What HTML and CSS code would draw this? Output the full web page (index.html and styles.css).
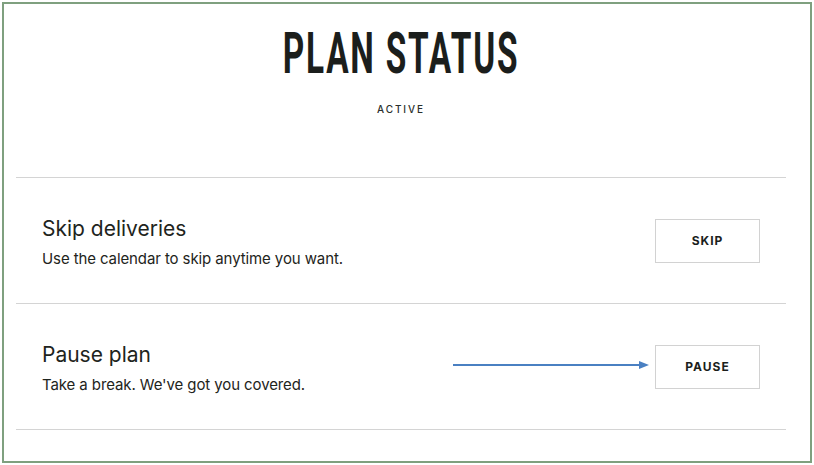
FILE: index.html
```html
<!DOCTYPE html>
<html>
<head>
<meta charset="utf-8">
<link rel="stylesheet" href="styles.css">
</head>
<body>
<div class="frame">
  <div class="column">
    <header class="header">
      <h1 class="title"><span class="title-text">PLAN STATUS</span></h1>
      <div class="status">ACTIVE</div>
    </header>
    <section class="row">
      <div class="info">
        <div class="info-title">Skip deliveries</div>
        <div class="info-sub">Use the calendar to skip anytime you want.</div>
      </div>
      <button class="btn">SKIP</button>
    </section>
    <section class="row">
      <div class="info">
        <div class="info-title">Pause plan</div>
        <div class="info-sub">Take a break. We've got you covered.</div>
      </div>
      <svg class="arrow" width="196" height="10" viewBox="0 0 196 10">
        <line x1="0" y1="5" x2="188" y2="5" stroke="#4a80c2" stroke-width="2"/>
        <polygon points="186,1 196,5 186,9" fill="#4a80c2"/>
      </svg>
      <button class="btn">PAUSE</button>
    </section>
    <div class="row-end"></div>
  </div>
</div>
</body>
</html>
```
FILE: styles.css
```css
html, body {
  margin: 0;
  padding: 0;
  background: #ffffff;
}
.frame {
  margin: 2px;
  width: 810px;
  height: 461px;
  box-sizing: border-box;
  border: 2px solid #7fa07f;
  padding: 0 24px 0 12px;
  font-family: Inter, "Noto Sans", sans-serif;
  color: #1e2420;
}
.column {
  display: flex;
  flex-direction: column;
}
.header {
  height: 173px;
  display: flex;
  flex-direction: column;
  align-items: center;
}
.title {
  margin: 17px 0 0 0;
  font-family: Roboto, "Liberation Sans", sans-serif;
  font-weight: 700;
  font-size: 57px;
  line-height: 66px;
  letter-spacing: 3px;
  color: #1b1e1c;
}
.title-text {
  display: inline-block;
  transform: scaleX(0.585);
  transform-origin: center;
}
.status {
  margin-top: 16px;
  font-size: 10px;
  font-weight: 500;
  letter-spacing: 1.9px;
  color: #2a2f2c;
}
.row {
  position: relative;
  height: 126px;
  box-sizing: border-box;
  border-top: 1px solid #d4d4d4;
  padding: 0 26px;
  display: flex;
  align-items: center;
  justify-content: space-between;
}
.row-end {
  border-top: 1px solid #d4d4d4;
}
.info {
  padding-top: 4px;
}
.info-title {
  font-size: 21px;
  line-height: 26px;
}
.info-sub {
  margin-top: 7px;
  font-size: 15px;
  line-height: 20px;
  letter-spacing: -0.1px;
}
.btn {
  width: 105px;
  height: 44px;
  background: #ffffff;
  border: 1px solid #d2d2d2;
  font-family: Inter, "Noto Sans", sans-serif;
  font-size: 12px;
  font-weight: 700;
  letter-spacing: 1px;
  color: #1b1e1c;
  padding: 0;
}
.arrow {
  position: absolute;
  left: 437px;
  top: 56px;
}
```
